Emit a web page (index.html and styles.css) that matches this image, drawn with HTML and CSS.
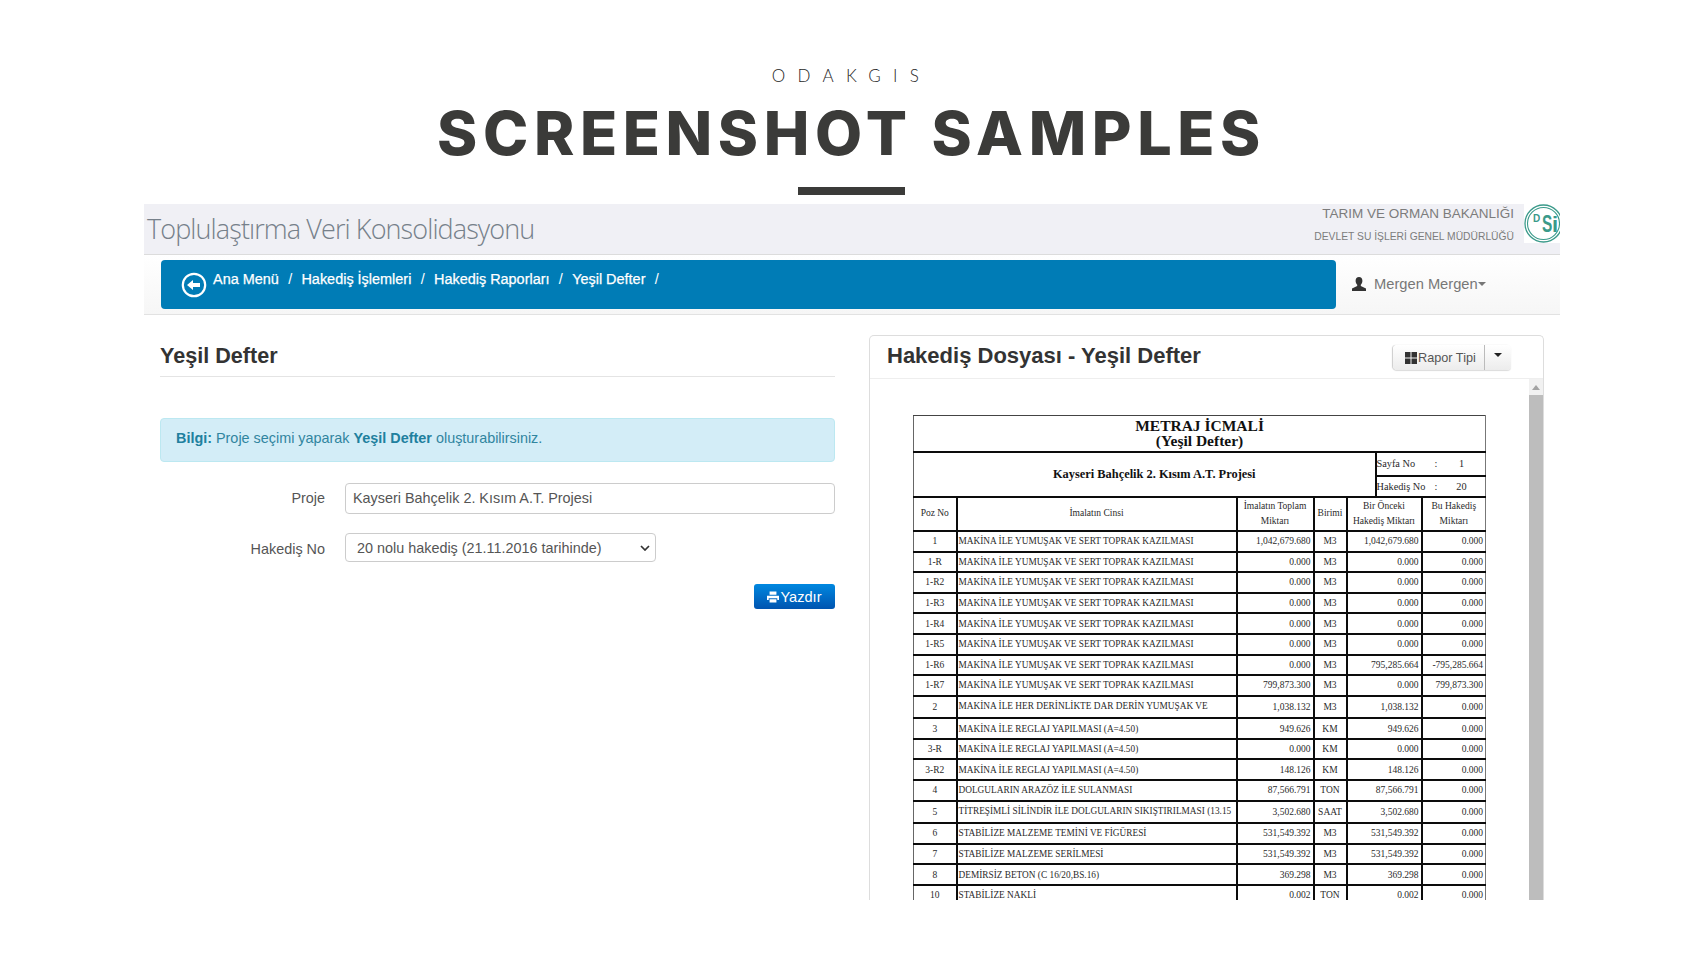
FILE: index.html
```html
<!DOCTYPE html>
<html lang="tr">
<head>
<meta charset="utf-8">
<title>Screenshot Samples</title>
<link rel="stylesheet" href="styles.css">
</head>
<body>
<header class="hero">
  <p class="eyebrow">ODAKGIS</p>
  <h1 class="hero-title">SCREENSHOT SAMPLES</h1>
  <div class="hero-rule"></div>
</header>
<main class="app">
  <div class="brand">
    <div class="brand-name">Toplulaştırma Veri Konsolidasyonu</div>
    <div class="ministry">
      <div class="ministry-main">TARIM VE ORMAN BAKANLIĞI</div>
      <div class="ministry-sub">DEVLET SU İŞLERİ GENEL MÜDÜRLÜĞÜ</div>
    </div>
    <div class="logo">
      <svg width="36" height="39" viewBox="0 0 36 39"><circle cx="19.500" cy="19.500" r="18.500" fill="none" stroke="#3a9a8a" stroke-width="1.300"/><circle cx="19.500" cy="19.500" r="16" fill="none" stroke="#3a9a8a" stroke-width="1.100"/><text x="9" y="18" class="logo-d">D</text><text transform="translate(18 28) scale(.67 1)" class="logo-s">S</text><text x="28" y="28" class="logo-i">i</text></svg>
    </div>
  </div>
  <div class="navband">
    <nav class="crumbs">
      <svg class="crumb-icon" width="26" height="26" viewBox="0 0 26 26"><circle cx="13" cy="13" r="11.200" fill="none" stroke="#fff" stroke-width="2.200"/><path d="M6 13l6-5v3h7v4h-7v3z" fill="#fff"/></svg>
      <span class="crumb">Ana Menü</span><span class="sep">/</span>
      <span class="crumb">Hakediş İşlemleri</span><span class="sep">/</span>
      <span class="crumb">Hakediş Raporları</span><span class="sep">/</span>
      <span class="crumb">Yeşil Defter</span><span class="sep">/</span>
    </nav>
    <div class="user">
      <svg width="14" height="14" viewBox="0 0 14 14"><path d="M7 0c2.200 0 3.400 1.600 3.400 3.800 0 1.700-.7 3.200-1.600 4v1.300L14 11.500V14H0v-2.500l5.200-2.400V7.800c-.9-.8-1.600-2.300-1.600-4C3.600 1.600 4.800 0 7 0z" fill="#333"/></svg>
      <span class="user-name">Mergen Mergen</span><span class="caret caret-grey"></span>
    </div>
  </div>
  <div class="columns">
    <section class="form-col">
      <h2 class="form-title">Yeşil Defter</h2>
      <div class="alert"><b>Bilgi:</b> Proje seçimi yaparak <b>Yeşil Defter</b> oluşturabilirsiniz.</div>
      <div class="field field-project">
        <label class="field-label">Proje</label>
        <div class="input">Kayseri Bahçelik 2. Kısım A.T. Projesi</div>
      </div>
      <div class="field field-select">
        <label class="field-label">Hakediş No</label>
        <div class="select">
          <span>20 nolu hakediş (21.11.2016 tarihinde)</span>
          <svg width="10" height="6" viewBox="0 0 10 6"><path d="M1 1l4 4 4-4" fill="none" stroke="#333" stroke-width="1.700"/></svg>
        </div>
      </div>
      <div class="actions">
        <button class="btn-print"><svg width="12" height="12" viewBox="0 0 14 13"><path d="M3 0h8v4H3zM0 5h14v5h-2V8H2v2H0zM3 9h8v4H3z" fill="#fff"/></svg>Yazdır</button>
      </div>
    </section>
    <section class="report">
      <div class="report-head">
        <h2 class="report-title">Hakediş Dosyası - Yeşil Defter</h2>
        <div class="btn-group">
          <div class="btn-type"><svg width="12" height="12" viewBox="0 0 12 12"><path d="M0 0h5.500v5.500H0zM6.500 0H12v5.500H6.500zM0 6.500h5.500V12H0zM6.500 6.500H12V12H6.500z" fill="#333"/></svg>Rapor Tipi</div>
          <div class="btn-drop"><span class="caret"></span></div>
        </div>
      </div>
      <div class="report-body">
        <div class="sheet">
          <table class="ledger">
            <colgroup><col class="c1"><col class="c2"><col class="c3"><col class="c4"><col class="c5"><col class="c6"><col class="c7"></colgroup>
            <tr class="r-title"><td colspan="7" class="doc-title">METRAJ İCMALİ<br>(Yeşil Defter)</td></tr>
            <tr class="r-meta1"><td colspan="5" rowspan="2" class="doc-project">Kayseri Bahçelik 2. Kısım A.T. Projesi</td><td colspan="2" class="meta"><span class="meta-k">Sayfa No</span><span class="meta-c">:</span><span class="meta-v">1</span></td></tr>
            <tr class="r-meta2"><td colspan="2" class="meta"><span class="meta-k">Hakediş No</span><span class="meta-c">:</span><span class="meta-v">20</span></td></tr>
            <tr class="r-head"><th>Poz No</th><th>İmalatın Cinsi</th><th>İmalatın Toplam Miktarı</th><th>Birimi</th><th colspan="2">Bir Önceki Hakediş Miktarı</th><th>Bu Hakediş Miktarı</th></tr>
            <tr><td class="ctr">1</td><td>MAKİNA İLE YUMUŞAK VE SERT TOPRAK KAZILMASI</td><td class="num">1,042,679.680</td><td class="ctr">M3</td><td colspan="2" class="num">1,042,679.680</td><td class="num">0.000</td></tr>
            <tr><td class="ctr">1-R</td><td>MAKİNA İLE YUMUŞAK VE SERT TOPRAK KAZILMASI</td><td class="num">0.000</td><td class="ctr">M3</td><td colspan="2" class="num">0.000</td><td class="num">0.000</td></tr>
            <tr><td class="ctr">1-R2</td><td>MAKİNA İLE YUMUŞAK VE SERT TOPRAK KAZILMASI</td><td class="num">0.000</td><td class="ctr">M3</td><td colspan="2" class="num">0.000</td><td class="num">0.000</td></tr>
            <tr><td class="ctr">1-R3</td><td>MAKİNA İLE YUMUŞAK VE SERT TOPRAK KAZILMASI</td><td class="num">0.000</td><td class="ctr">M3</td><td colspan="2" class="num">0.000</td><td class="num">0.000</td></tr>
            <tr><td class="ctr">1-R4</td><td>MAKİNA İLE YUMUŞAK VE SERT TOPRAK KAZILMASI</td><td class="num">0.000</td><td class="ctr">M3</td><td colspan="2" class="num">0.000</td><td class="num">0.000</td></tr>
            <tr><td class="ctr">1-R5</td><td>MAKİNA İLE YUMUŞAK VE SERT TOPRAK KAZILMASI</td><td class="num">0.000</td><td class="ctr">M3</td><td colspan="2" class="num">0.000</td><td class="num">0.000</td></tr>
            <tr><td class="ctr">1-R6</td><td>MAKİNA İLE YUMUŞAK VE SERT TOPRAK KAZILMASI</td><td class="num">0.000</td><td class="ctr">M3</td><td colspan="2" class="num">795,285.664</td><td class="num">-795,285.664</td></tr>
            <tr><td class="ctr">1-R7</td><td>MAKİNA İLE YUMUŞAK VE SERT TOPRAK KAZILMASI</td><td class="num">799,873.300</td><td class="ctr">M3</td><td colspan="2" class="num">0.000</td><td class="num">799,873.300</td></tr>
            <tr class="tall"><td class="ctr">2</td><td class="up">MAKİNA İLE HER DERİNLİKTE DAR DERİN YUMUŞAK VE</td><td class="num">1,038.132</td><td class="ctr">M3</td><td colspan="2" class="num">1,038.132</td><td class="num">0.000</td></tr>
            <tr><td class="ctr">3</td><td>MAKİNA İLE REGLAJ YAPILMASI (A=4.50)</td><td class="num">949.626</td><td class="ctr">KM</td><td colspan="2" class="num">949.626</td><td class="num">0.000</td></tr>
            <tr><td class="ctr">3-R</td><td>MAKİNA İLE REGLAJ YAPILMASI (A=4.50)</td><td class="num">0.000</td><td class="ctr">KM</td><td colspan="2" class="num">0.000</td><td class="num">0.000</td></tr>
            <tr><td class="ctr">3-R2</td><td>MAKİNA İLE REGLAJ YAPILMASI (A=4.50)</td><td class="num">148.126</td><td class="ctr">KM</td><td colspan="2" class="num">148.126</td><td class="num">0.000</td></tr>
            <tr><td class="ctr">4</td><td>DOLGULARIN ARAZÖZ İLE SULANMASI</td><td class="num">87,566.791</td><td class="ctr">TON</td><td colspan="2" class="num">87,566.791</td><td class="num">0.000</td></tr>
            <tr class="tall"><td class="ctr">5</td><td class="up">TİTREŞİMLİ SİLİNDİR İLE DOLGULARIN SIKIŞTIRILMASI (13.15</td><td class="num">3,502.680</td><td class="ctr">SAAT</td><td colspan="2" class="num">3,502.680</td><td class="num">0.000</td></tr>
            <tr><td class="ctr">6</td><td>STABİLİZE MALZEME TEMİNİ VE FİGÜRESİ</td><td class="num">531,549.392</td><td class="ctr">M3</td><td colspan="2" class="num">531,549.392</td><td class="num">0.000</td></tr>
            <tr><td class="ctr">7</td><td>STABİLİZE MALZEME SERİLMESİ</td><td class="num">531,549.392</td><td class="ctr">M3</td><td colspan="2" class="num">531,549.392</td><td class="num">0.000</td></tr>
            <tr><td class="ctr">8</td><td>DEMİRSİZ BETON (C 16/20,BS.16)</td><td class="num">369.298</td><td class="ctr">M3</td><td colspan="2" class="num">369.298</td><td class="num">0.000</td></tr>
            <tr><td class="ctr">10</td><td>STABİLİZE NAKLİ</td><td class="num">0.002</td><td class="ctr">TON</td><td colspan="2" class="num">0.002</td><td class="num">0.000</td></tr>
          </table>
        </div>
        <div class="scrollbar">
          <div class="scroll-arrow"></div>
          <div class="scroll-thumb"></div>
        </div>
      </div>
    </section>
  </div>
</main>
</body>
</html>
```
FILE: styles.css
```css
* { box-sizing: border-box; }
html, body { margin: 0; height: 100%; }
body {
  width: 1704px;
  height: 954px;
  overflow: hidden;
  background: #fff;
  font-family: "Liberation Sans", Arial, sans-serif;
  color: #333;
}

/* Hero */
.hero { height: 204px; padding: 66px 1px 0 0; text-align: center; }
.eyebrow {
  margin: 0;
  font-family: "Lato", sans-serif;
  font-weight: 300;
  font-size: 17px;
  line-height: 20px;
  letter-spacing: 12.300px;
  color: #1f1f1f;
}
.hero-title {
  margin: 15px 0 0;
  font-family: "Inter", sans-serif;
  font-weight: 800;
  font-size: 61px;
  line-height: 64px;
  letter-spacing: 5.600px;
  color: #3b3b39;
}
.hero-rule { width: 107px; height: 8px; margin: 22px auto 0; background: #3b3b39; }

/* App frame */
.app { margin: 0 144px; height: 696px; overflow: hidden; background: #fff; }
.brand {
  display: flex;
  height: 51px;
  background: #f0f0f5;
  border-bottom: 1px solid #dcdcdc;
}
.brand-name {
  flex: 1;
  padding: 6px 0 0 3px;
  font-family: "Open Sans", sans-serif;
  font-weight: 300;
  font-size: 27px;
  line-height: 38px;
  letter-spacing: -0.9px;
  color: #76808a;
}
.ministry { padding: 2px 10px 0 0; text-align: right; color: #7c7c7c; }
.ministry-main { font-size: 13.500px; line-height: 16px; }
.ministry-sub { margin-top: 9px; font-size: 10.300px; line-height: 12px; }
.logo { width: 36px; height: 39px; background: #fff; }
.logo svg { display: block; }
.logo-d { font: 700 10px "Liberation Sans", sans-serif; fill: #3a9a8a; }
.logo-s { font: 700 23px "Liberation Sans", sans-serif; fill: #3a9a8a; }
.logo-i { font: 700 22px "Liberation Sans", sans-serif; fill: #3a9a8a; }

.navband {
  display: flex;
  align-items: flex-start;
  height: 60px;
  padding: 5px 0 0 17px;
  background: linear-gradient(#fff, #f6f6f6);
  border-bottom: 1px solid #e2e2e2;
}
.crumbs {
  display: flex;
  align-items: flex-start;
  width: 1175px;
  height: 49px;
  padding: 11px 0 0 20px;
  background: #007cb6;
  border-radius: 4px;
  color: #fff;
  font-size: 14.450px;
  line-height: 16px;
  -webkit-text-stroke: 0.25px #fff;
}
.crumb-icon { margin: 1px 6px 0 0; }
.crumb { white-space: nowrap; }
.sep { margin: 0 9.300px; -webkit-text-stroke: 0; }
.user {
  display: flex;
  align-items: center;
  height: 48px;
  padding-left: 16px;
  font-size: 14.700px;
  color: #777;
}
.user svg { margin-right: 8px; }
.caret {
  display: inline-block;
  width: 0;
  height: 0;
  border-left: 4.500px solid transparent;
  border-right: 4.500px solid transparent;
  border-top: 4.500px solid #222;
}
.caret-grey { border-top-color: #777; }

/* Columns */
.columns { display: flex; height: 585px; padding: 20px 16px 0 16px; gap: 34px; }
.form-col { width: 675px; flex: none; }
.form-title {
  margin: 0;
  height: 42px;
  padding-top: 8px;
  font-size: 21.600px;
  line-height: 26px;
  font-weight: 700;
  color: #333;
  border-bottom: 1px solid #e4e4e4;
}
.alert {
  height: 44px;
  margin-top: 41px;
  padding: 10px 15px;
  font-size: 14.400px;
  line-height: 18px;
  color: #31859f;
  background: #d3edf7;
  border: 1px solid #bce8f1;
  border-radius: 4px;
}
.alert b { color: #20809e; }
.field { display: flex; align-items: center; font-size: 14.400px; color: #555; }
.field-project { margin-top: 21px; }
.field-project .field-label { padding-bottom: 1px; }
.field-select { margin-top: 19px; }
.field-select .field-label { padding-top: 2px; }
.field-label { width: 165px; margin-right: 20px; text-align: right; }
.input {
  flex: 1;
  height: 31px;
  padding: 0 7px;
  line-height: 28px;
  border: 1px solid #ccc;
  border-radius: 4px;
  background: #fff;
}
.select {
  display: flex;
  align-items: center;
  justify-content: space-between;
  width: 311px;
  height: 29px;
  padding: 0 5px 0 11px;
  color: #555;
  border: 1px solid #ccc;
  border-radius: 4px;
  background: #fff;
}
.actions { display: flex; justify-content: flex-end; margin-top: 22px; }
.btn-print {
  display: flex;
  align-items: center;
  justify-content: center;
  width: 81px;
  height: 25px;
  padding: 0;
  font: 14.600px "Liberation Sans", sans-serif;
  color: #fff;
  border: 0;
  border-radius: 3px;
  background: linear-gradient(#0088e0, #0054b0);
}
.btn-print svg { margin-right: 1px; }

/* Report */
.report {
  flex: 1;
  display: flex;
  flex-direction: column;
  height: 600px;
  border: 1px solid #ddd;
  border-bottom: 0;
  border-radius: 5px 5px 0 0;
}
.report-head {
  display: flex;
  align-items: flex-start;
  justify-content: space-between;
  flex: none;
  height: 43px;
  padding: 7px 32px 0 17px;
  border-bottom: 1px solid #eee;
}
.report-title { margin: 0; font-size: 22px; line-height: 25px; font-weight: 700; color: #333; }
.btn-group {
  display: flex;
  width: 118px;
  height: 25px;
  margin-top: 2px;
  border-radius: 4px;
  font-size: 12.700px;
  color: #555;
  background: linear-gradient(#fff, #ececec);
  box-shadow: -1px 0 1px #ccc, 0 1px 1px #ddd;
}
.btn-type {
  display: flex;
  align-items: center;
  gap: 1px;
  width: 92px;
  padding-left: 12px;
  border-right: 1px solid #bbb;
}
.btn-drop { flex: 1; display: flex; align-items: flex-start; justify-content: center; padding-top: 8px; }
.report-body { flex: 1; display: flex; min-height: 0; }
.sheet { flex: 1; padding: 36px 0 0 43px; }
.scrollbar { width: 14px; flex: none; background: #f1f1f1; display: flex; flex-direction: column; }
.scroll-arrow {
  width: 0;
  height: 0;
  margin: 6px auto 5px;
  border-left: 4px solid transparent;
  border-right: 4px solid transparent;
  border-bottom: 5px solid #a3a3a3;
}
.scroll-thumb { flex: 1; background: #bdbdbd; }

/* Ledger */
.ledger {
  table-layout: fixed;
  width: 572px;
  border-collapse: collapse;
  font-family: "Liberation Serif", "Times New Roman", serif;
  font-size: 9.500px;
  color: #2a2a2a;
}
.c1 { width: 43px; }
.c2 { width: 280px; }
.c3 { width: 77px; }
.c4 { width: 33px; }
.c5 { width: 29px; }
.c6 { width: 46px; }
.c7 { width: 64px; }
.ledger td, .ledger th {
  padding: 0 2px;
  border: 2px solid #0c0c0c;
  overflow: hidden;
  white-space: nowrap;
  font-weight: 400;
}
.ledger td:first-child, .ledger th:first-child { border-left: 1px solid #666; }
.ledger td:last-child, .ledger th:last-child { border-right: 1px solid #777; }
.ledger th { text-align: center; white-space: normal; line-height: 15px; font-size: 9.500px; }
.ledger tr { height: 20.600px; }
.ledger .tall { height: 22.500px; }
.ledger .r-title { height: 36px; }
.ledger .r-meta1 { height: 24px; }
.ledger .r-meta2 { height: 21px; }
.ledger .r-head { height: 34.500px; }
.ledger tr:nth-child(n+5) td:nth-child(2) { font-size: 9.300px; padding-left: 1px; }
.ledger .doc-title {
  text-align: center;
  font-size: 15.500px;
  line-height: 15px;
  font-weight: 700;
  color: #111;
  border-top: 1px solid #444;
}
.ledger .doc-project { padding-left: 22px; text-align: center; font-size: 12.400px; font-weight: 700; color: #111; }
.ledger .meta { font-size: 10.300px; padding: 0; }
.meta-k { display: inline-block; width: 58px; }
.meta-c { display: inline-block; width: 18px; }
.meta-v { display: inline-block; width: 18px; text-align: center; }
.ctr { text-align: center; }
.num { text-align: right; }
.ledger tr:nth-child(n+5) td.up { padding-bottom: 2px; }
```
